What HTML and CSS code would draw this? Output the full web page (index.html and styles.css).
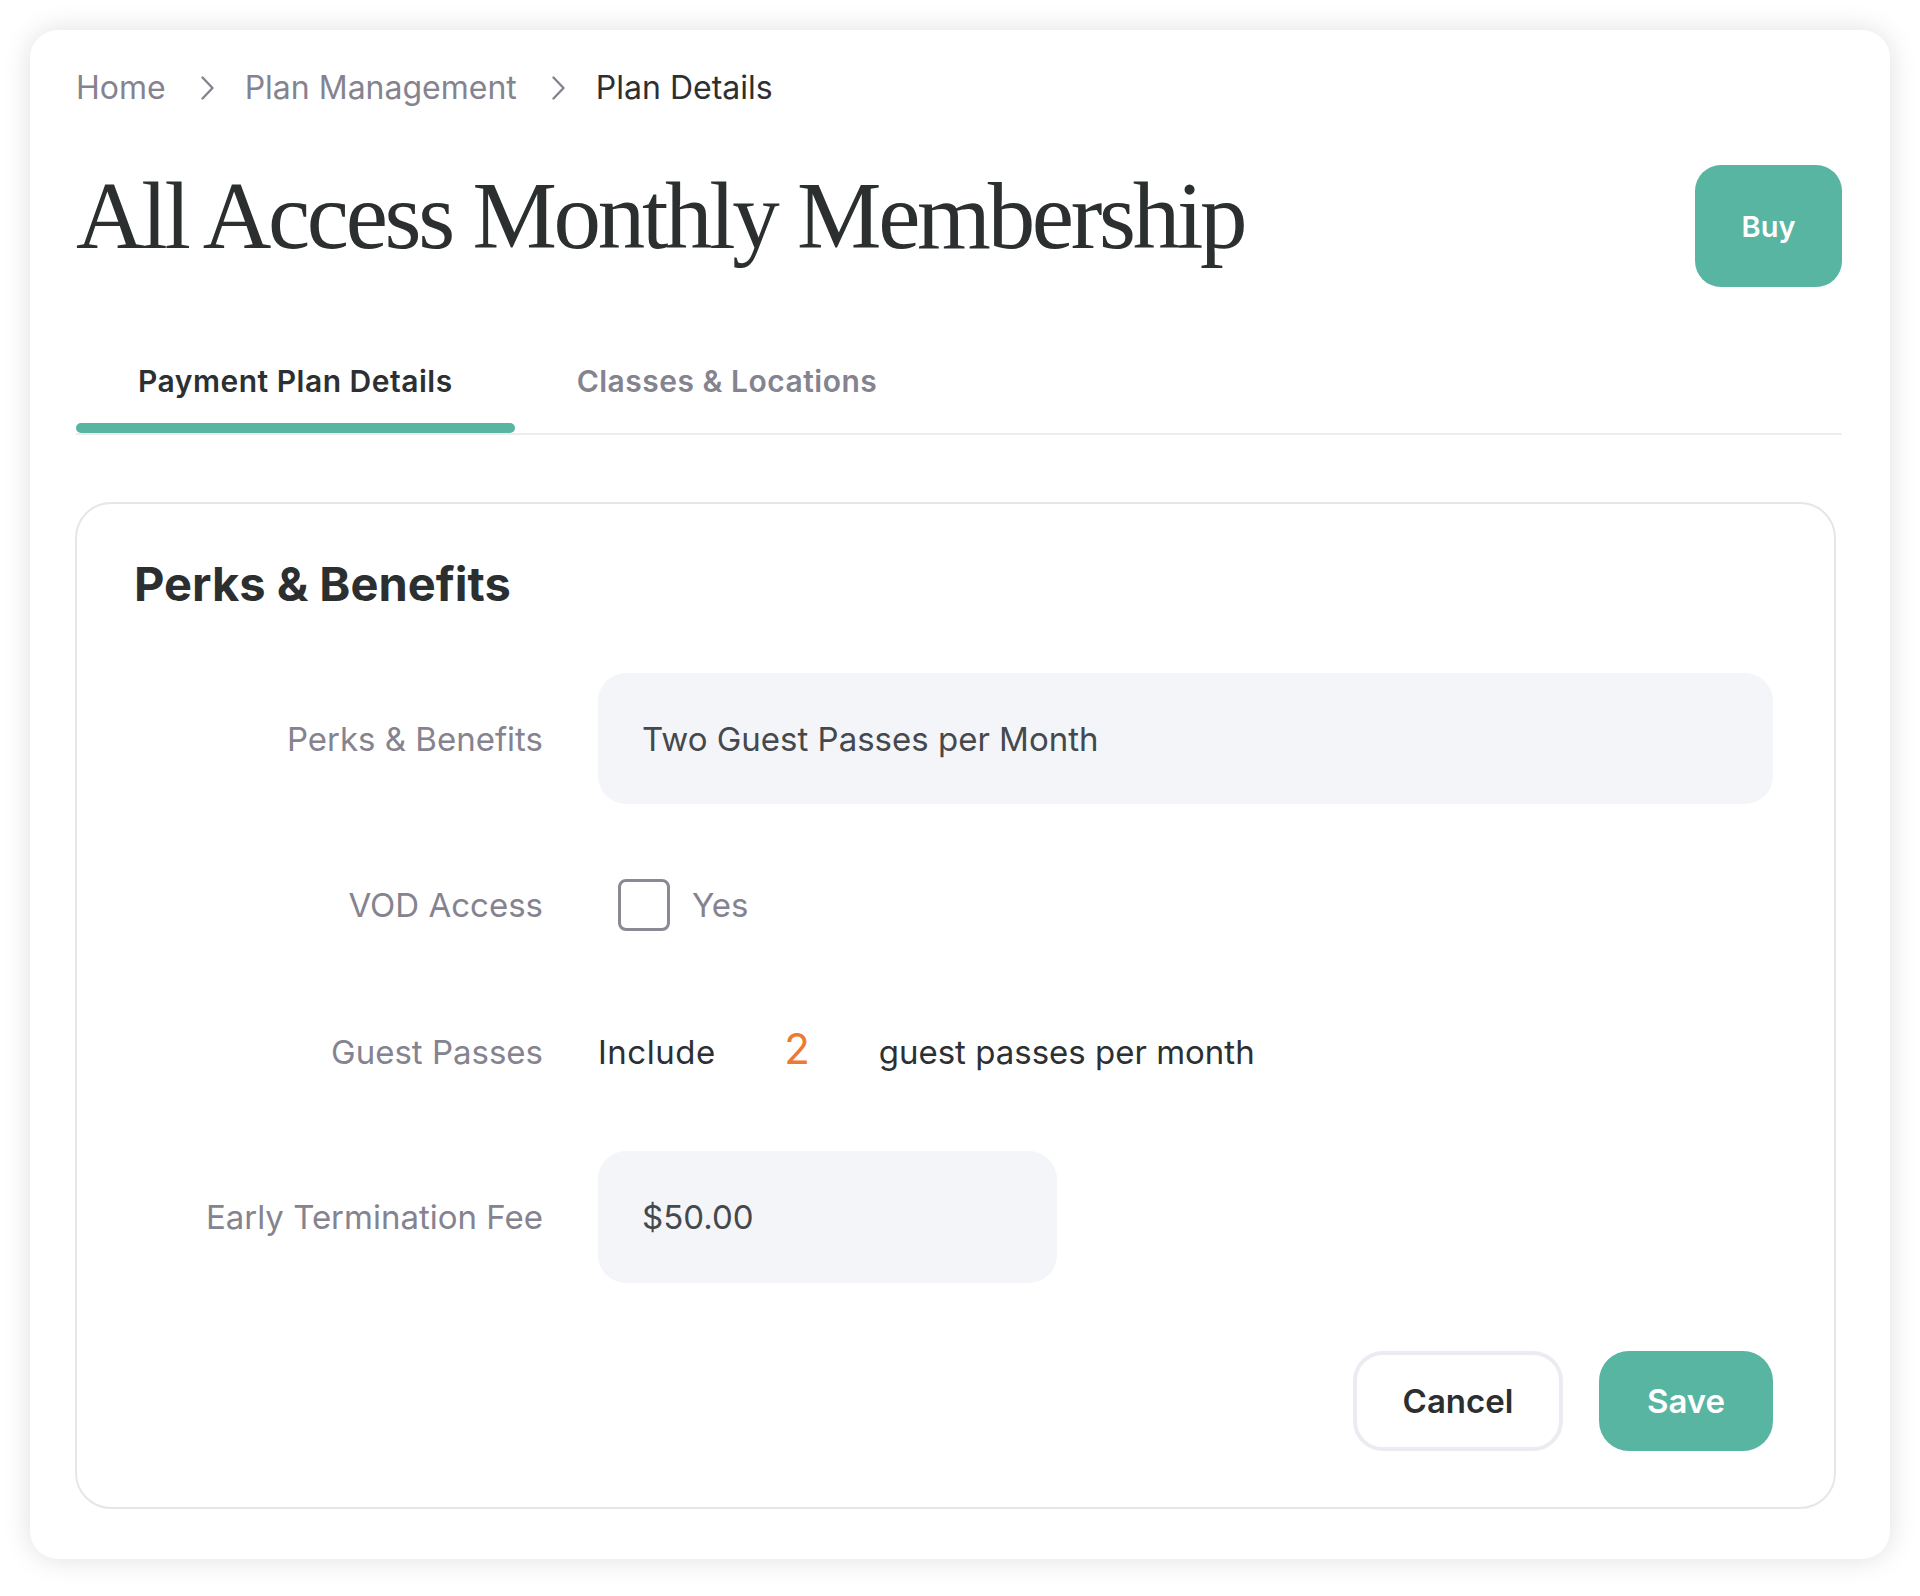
FILE: index.html
```html
<!DOCTYPE html>
<html lang="en">
<head>
<meta charset="utf-8">
<title>Plan Details</title>
<link rel="stylesheet" href="styles.css">
</head>
<body>
<div class="page">
  <div class="card">
    <nav class="crumbs">
      <span class="crumb">Home</span>
      <svg class="chev" viewBox="0 0 13 24" width="13" height="24"><path d="M1.5 1.5 L11.5 12 L1.5 22.5" fill="none" stroke="currentColor" stroke-width="2.4" stroke-linecap="round" stroke-linejoin="round"/></svg>
      <span class="crumb">Plan Management</span>
      <svg class="chev" viewBox="0 0 13 24" width="13" height="24"><path d="M1.5 1.5 L11.5 12 L1.5 22.5" fill="none" stroke="currentColor" stroke-width="2.4" stroke-linecap="round" stroke-linejoin="round"/></svg>
      <span class="crumb current">Plan Details</span>
    </nav>

    <header class="head">
      <h1 class="title">All Access Monthly Membership</h1>
      <button class="btn btn-primary btn-buy">Buy</button>
    </header>

    <div class="tabs">
      <div class="tab active">Payment Plan Details</div>
      <div class="tab">Classes &amp; Locations</div>
    </div>

    <section class="panel">
      <h2 class="panel-title">Perks &amp; Benefits</h2>

      <div class="row row-1">
        <div class="label">Perks &amp; Benefits</div>
        <div class="field"><div class="input input-wide">Two Guest Passes per Month</div></div>
      </div>

      <div class="row row-2">
        <div class="label">VOD Access</div>
        <div class="field check-field">
          <span class="checkbox"></span>
          <span class="check-label">Yes</span>
        </div>
      </div>

      <div class="row row-3">
        <div class="label">Guest Passes</div>
        <div class="field inline-field">
          <span class="inline-text">Include</span>
          <span class="count">2</span>
          <span class="inline-text">guest passes per month</span>
        </div>
      </div>

      <div class="row row-4">
        <div class="label">Early Termination Fee</div>
        <div class="field"><div class="input input-short">$50.00</div></div>
      </div>

      <div class="actions">
        <button class="btn btn-outline">Cancel</button>
        <button class="btn btn-primary btn-save">Save</button>
      </div>
    </section>
  </div>
</div>
</body>
</html>
```

FILE: styles.css
```css
* { box-sizing: border-box; }

html, body {
  margin: 0;
  padding: 0;
  background: #ffffff;
}

body {
  font-family: "Inter", "Noto Sans", sans-serif;
  color: #2d3033;
}

.page {
  padding: 30px;
}

.card {
  width: 1860px;
  background: #ffffff;
  border-radius: 28px;
  box-shadow: 0 0 28px rgba(0, 0, 0, 0.13);
  padding: 38px 48px 50px 46px;
}

/* breadcrumbs */
.crumbs {
  display: flex;
  align-items: center;
  font-size: 32px;
  line-height: 40px;
  color: #85838f;
}

.crumb { white-space: nowrap; }
.crumb.current { color: #2d3033; }

.chev {
  color: #85838f;
  margin: 0 31px 0 35px;
  flex: none;
}

/* header */
.head {
  display: flex;
  justify-content: space-between;
  align-items: flex-start;
  margin-top: 57px;
}

.title {
  margin: 4px 0 0 0;
  font-family: "Liberation Serif", "Times New Roman", serif;
  font-weight: 400;
  font-size: 95px;
  line-height: 95px;
  letter-spacing: -3.3px;
  color: #2b2f30;
}

.btn {
  font-family: "Inter", "Noto Sans", sans-serif;
  font-weight: 600;
  border: none;
  cursor: pointer;
  padding: 0;
}

.btn-primary {
  background: #58b5a2;
  color: #ffffff;
}

.btn-buy {
  width: 147px;
  height: 122px;
  border-radius: 26px;
  font-size: 29px;
}

/* tabs */
.tabs {
  display: flex;
  margin-top: 77px;
  border-bottom: 2px solid #ebebf1;
}

.tab {
  font-size: 30px;
  line-height: 34px;
  font-weight: 600;
  letter-spacing: 0.5px;
  color: #85838f;
  padding: 0 62px 35px;
  position: relative;
}

.tab.active { color: #2d3033; }

.tab.active::after {
  content: "";
  position: absolute;
  left: 0;
  right: 0;
  bottom: 0;
  height: 10px;
  border-radius: 5px;
  background: #58b5a2;
}

/* panel */
.panel {
  margin: 67px 6px 0 -1px;
  border: 2px solid #e6e6e9;
  border-radius: 36px;
  padding: 51px 61px 56px 57px;
}

.panel-title {
  margin: 0;
  font-size: 47px;
  line-height: 58px;
  font-weight: 700;
  color: #2b2f30;
}

.row {
  display: flex;
  align-items: center;
}

.row-1 { margin-top: 60px; }
.row-2 { margin-top: 75px; }
.row-3 { margin-top: 95px; }
.row-4 { margin-top: 73px; }

.label {
  width: 409px;
  flex: none;
  text-align: right;
  font-size: 33px;
  line-height: 52px;
  color: #85838f;
  margin-right: 55px;
}

.field {
  flex: 1;
  font-size: 33px;
  line-height: 52px;
}

.input {
  background: #f4f5f9;
  border-radius: 28px;
  height: 131px;
  display: flex;
  align-items: center;
  padding-left: 44px;
  color: #45484c;
  font-size: 33px;
}

.input-short { width: 459px; height: 132px; }

.check-field {
  display: flex;
  align-items: center;
  padding-left: 20px;
}

.checkbox {
  width: 52px;
  height: 52px;
  border: 3px solid #8b8a94;
  border-radius: 8px;
  flex: none;
}

.check-label {
  margin-left: 22px;
  color: #85838f;
}

.inline-field {
  display: flex;
  align-items: center;
}

.inline-text { color: #2d3033; }
.inline-text:first-child { letter-spacing: 0.5px; }

.count {
  width: 163px;
  text-align: center;
  color: #ee7a2e;
  font-size: 42px;
  line-height: 52px;
  margin-top: -6px;
}

.actions {
  display: flex;
  justify-content: flex-end;
  gap: 36px;
  margin-top: 68px;
}

.btn-outline {
  width: 210px;
  height: 100px;
  border-radius: 30px;
  border: 4px solid #ebecf2;
  background: #ffffff;
  color: #2b2f30;
  font-size: 33px;
}

.btn-save {
  width: 174px;
  height: 100px;
  border-radius: 30px;
  font-size: 33px;
}
```
